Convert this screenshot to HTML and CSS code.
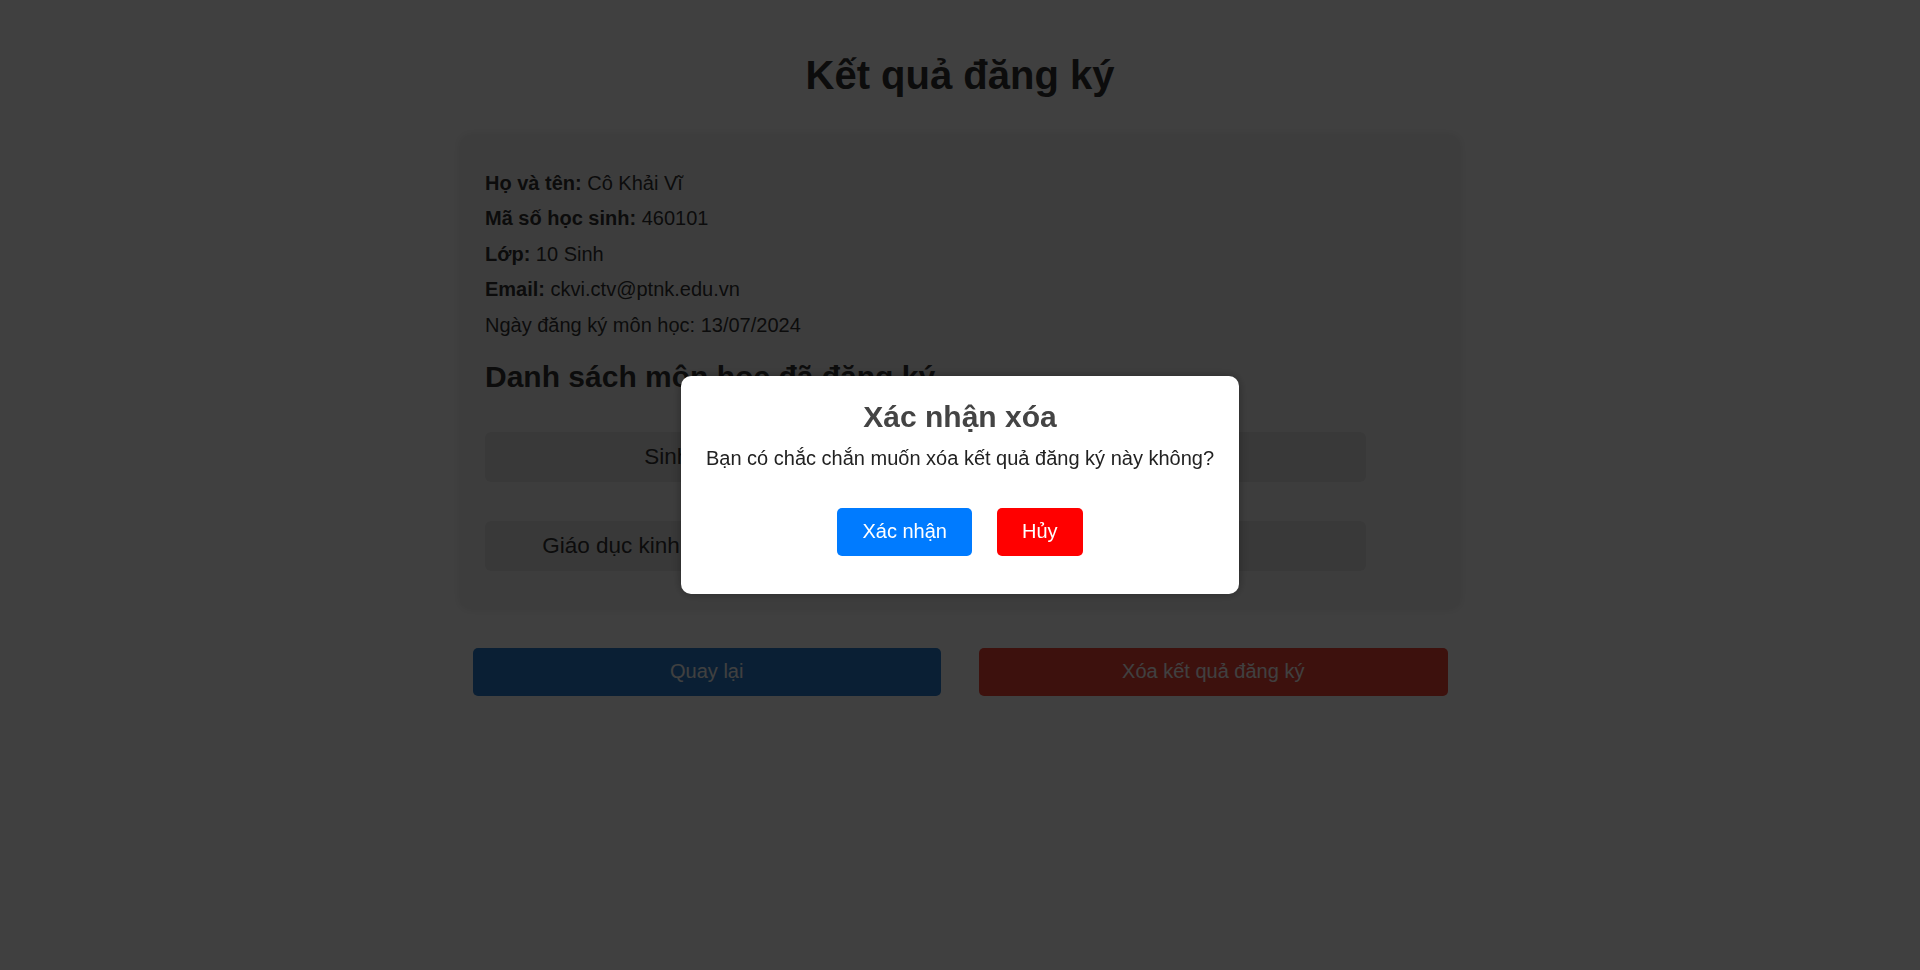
FILE: index.html
```html
<!DOCTYPE html>
<html lang="vi">
<head>
<meta charset="utf-8">
<title>Kết quả đăng ký</title>
<link rel="stylesheet" href="styles.css">
</head>
<body>
  <h1 class="page-title">Kết quả đăng ký</h1>
  <div class="result-card">
    <p class="info-line"><strong>Họ và tên:</strong> Cô Khải Vĩ</p>
    <p class="info-line"><strong>Mã số học sinh:</strong> 460101</p>
    <p class="info-line"><strong>Lớp:</strong> 10 Sinh</p>
    <p class="info-line"><strong>Email:</strong> ckvi.ctv@ptnk.edu.vn</p>
    <p class="info-line">Ngày đăng ký môn học: 13/07/2024</p>
    <h2 class="section-title">Danh sách môn học đã đăng ký</h2>
    <div class="subject-list">
      <div class="subject-item"><span class="subject-name">Sinh học</span><span class="subject-extra"></span></div>
      <div class="subject-item"><span class="subject-name">Giáo dục kinh tế và pháp luật</span><span class="subject-extra"></span></div>
    </div>
  </div>
  <div class="actions">
    <button class="action-btn btn-back">Quay lại</button>
    <button class="action-btn btn-delete">Xóa kết quả đăng ký</button>
  </div>

  <div class="overlay">
    <div class="modal">
      <h2 class="modal-title">Xác nhận xóa</h2>
      <p class="modal-text">Bạn có chắc chắn muốn xóa kết quả đăng ký này không?</p>
      <div class="modal-buttons">
        <button class="modal-btn btn-confirm">Xác nhận</button>
        <button class="modal-btn btn-cancel">Hủy</button>
      </div>
    </div>
  </div>
</body>
</html>
```
FILE: styles.css
```css
* { box-sizing: border-box; }

html, body { height: 100%; }

body {
  margin: 0;
  padding: 25px;
  background: #ffffff;
  color: #333333;
  font-family: "Liberation Sans", Arial, sans-serif;
  font-size: 20px;
}

.page-title {
  margin: 27px 0 37px;
  font-size: 40px;
  line-height: 46px;
  text-align: center;
  font-weight: bold;
}

.result-card {
  width: 1000px;
  margin: 0 auto;
  padding: 24px 25px 26.5px;
  background: #f4f4f4;
  border-radius: 10px;
  box-shadow: 0 0 10px rgba(0, 0, 0, 0.1);
}

.info-line {
  margin: 12.5px 0;
  line-height: 23px;
}

.section-title {
  margin: 23.5px 0 0;
  font-size: 30px;
  line-height: 34.5px;
  font-weight: bold;
}

.subject-list {
  margin: 37px 0 11px;
  display: flex;
  flex-direction: column;
  gap: 38.5px;
}

.subject-item {
  width: 881px;
  display: grid;
  grid-template-columns: 406px 1fr;
  padding: 12.5px 0;
  background: #e3e3e3;
  border-radius: 6px;
  font-size: 22.5px;
  line-height: 25.5px;
}

.subject-name { text-align: center; }

.actions {
  width: 1000px;
  margin: 39px auto 0;
  padding: 0 12.5px;
  display: grid;
  grid-template-columns: 1fr 1fr;
  gap: 38px;
}

.action-btn {
  border: none;
  border-radius: 5px;
  padding: 12.5px;
  font-family: inherit;
  font-size: 20px;
  line-height: 23px;
  color: #ffffff;
}

.btn-back { background: #287dcd; }
.btn-delete { background: #f44336; }

.overlay {
  position: fixed;
  inset: 0;
  background: rgba(0, 0, 0, 0.75);
  display: flex;
  align-items: center;
  justify-content: center;
}

.modal {
  width: max-content;
  padding: 24px 25px 26px;
  background: #ffffff;
  border-radius: 10px;
  box-shadow: 0 0 12px rgba(0, 0, 0, 0.35);
  text-align: center;
}

.modal-title {
  margin: 0 0 12.5px;
  font-size: 30px;
  line-height: 34.5px;
  color: #444444;
  font-weight: bold;
}

.modal-text {
  margin: 12.5px 0 0;
  line-height: 23px;
  color: #222222;
}

.modal-buttons {
  margin: 37.5px 0 12.5px;
  display: flex;
  justify-content: center;
  gap: 25px;
}

.modal-btn {
  border: none;
  border-radius: 5px;
  padding: 12.5px 25px;
  font-family: inherit;
  font-size: 20px;
  line-height: 23px;
  color: #ffffff;
}

.btn-confirm { background: #007bff; }
.btn-cancel { background: #ff0000; }
```
